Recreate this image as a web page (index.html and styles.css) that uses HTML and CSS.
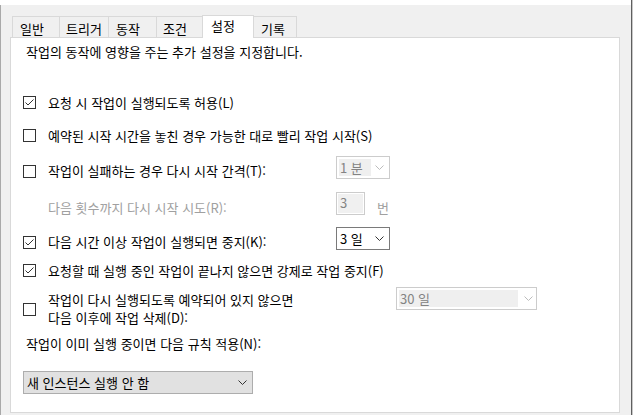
FILE: index.html
```html
<!DOCTYPE html>
<html lang="ko">
<head>
<meta charset="utf-8">
<title>설정</title>
<link rel="stylesheet" href="styles.css">
</head>
<body>
<div class="frame">
  <div class="main">
    <div class="topstrip"></div>
    <div class="workspace">
      <div class="tabs">
        <div class="tab t1">일반</div>
        <div class="tab t2">트리거</div>
        <div class="tab t3">동작</div>
        <div class="tab t4">조건</div>
        <div class="tab t5 active">설정</div>
        <div class="tab t6">기록</div>
      </div>
      <div class="panel">
        <p class="desc">작업의 동작에 영향을 주는 추가 설정을 지정합니다.</p>

        <div class="row r1">
          <span class="cb"><svg width="11" height="11" viewBox="0 0 11 11"><polyline points="1.5,5.5 4,8 9.5,2.5" fill="none" stroke="#333" stroke-width="1"/></svg></span>
          <span class="label">요청 시 작업이 실행되도록 허용(L)</span>
        </div>

        <div class="row r2">
          <span class="cb"></span>
          <span class="label">예약된 시작 시간을 놓친 경우 가능한 대로 빨리 작업 시작(S)</span>
        </div>

        <div class="row r3 ctl">
          <span class="cb"></span>
          <span class="label fixed">작업이 실패하는 경우 다시 시작 간격(T):</span>
          <div class="dd small disabled">
            <span class="val">1 분</span>
            <svg class="chev" width="9" height="5" viewBox="0 0 9 5"><polyline points="0.5,0.5 4.5,4.5 8.5,0.5" fill="none" stroke="#bcbcbc" stroke-width="1"/></svg>
          </div>
        </div>

        <div class="row r4 ctl">
          <span class="cb-space"></span>
          <span class="label fixed dim lower">다음 횟수까지 다시 시작 시도(R):</span>
          <div class="num disabled"><span class="val">3</span></div>
          <span class="unit dim">번</span>
        </div>

        <div class="row r5 ctl">
          <span class="cb"><svg width="11" height="11" viewBox="0 0 11 11"><polyline points="1.5,5.5 4,8 9.5,2.5" fill="none" stroke="#333" stroke-width="1"/></svg></span>
          <span class="label fixed">다음 시간 이상 작업이 실행되면 중지(K):</span>
          <div class="dd small">
            <span class="val">3 일</span>
            <svg class="chev" width="9" height="5" viewBox="0 0 9 5"><polyline points="0.5,0.5 4.5,4.5 8.5,0.5" fill="none" stroke="#333" stroke-width="1"/></svg>
          </div>
        </div>

        <div class="row r6">
          <span class="cb"><svg width="11" height="11" viewBox="0 0 11 11"><polyline points="1.5,5.5 4,8 9.5,2.5" fill="none" stroke="#333" stroke-width="1"/></svg></span>
          <span class="label">요청할 때 실행 중인 작업이 끝나지 않으면 강제로 작업 중지(F)</span>
        </div>

        <div class="row r7 ctl">
          <span class="cb"></span>
          <span class="label fixed wide">작업이 다시 실행되도록 예약되어 있지 않으면<br>다음 이후에 작업 삭제(D):</span>
          <div class="dd large disabled">
            <span class="val">30 일</span>
            <svg class="chev" width="9" height="5" viewBox="0 0 9 5"><polyline points="0.5,0.5 4.5,4.5 8.5,0.5" fill="none" stroke="#bcbcbc" stroke-width="1"/></svg>
          </div>
        </div>

        <p class="rule-label">작업이 이미 실행 중이면 다음 규칙 적용(N):</p>

        <div class="combo">
          <span class="val">새 인스턴스 실행 안 함</span>
          <svg class="chev" width="9" height="5" viewBox="0 0 9 5"><polyline points="0.5,0.5 4.5,4.5 8.5,0.5" fill="none" stroke="#333" stroke-width="1"/></svg>
        </div>
      </div>
    </div>
  </div>
  <div class="edge"></div>
</div>
</body>
</html>
```

FILE: styles.css
```css
html, body {
  margin: 0;
  padding: 0;
}

body {
  width: 633px;
  height: 415px;
  overflow: hidden;
  background: #f0f0f0;
  font-family: "Noto Sans CJK KR", "Noto Sans", sans-serif;
  font-size: 13px;
  line-height: 16px;
  color: #000;
}

.frame {
  display: flex;
  width: 633px;
  height: 415px;
}

.main {
  flex: 0 0 631px;
  display: flex;
  flex-direction: column;
}

.topstrip {
  height: 5px;
  background: #ffffff;
}

.workspace {
  flex: 1;
  background: #f0f0f0;
  border-left: 1px solid #a9a9a9;
  padding: 10px 10px 0 9px;
  display: flex;
  flex-direction: column;
}

.edge {
  flex: 0 0 2px;
  background: linear-gradient(to right, #5f5f5f 0 1px, #c8c8c8 1px 2px);
}

/* tabs */
.tabs {
  display: flex;
  align-items: flex-end;
  padding-left: 2px;
  margin-bottom: -1px;
  height: 23px;
}

.tab {
  box-sizing: border-box;
  height: 22px;
  border: 1px solid #d9d9d9;
  border-right: none;
  border-bottom: none;
  background: #f0f0f0;
  padding: 4px 0 0 6px;
  white-space: nowrap;
}

.t1 { width: 47px; padding-left: 7px; }
.t2 { width: 49px; }
.t3 { width: 48px; padding-left: 7px; }
.t4 { width: 46px; }
.t5 { width: 52px; }
.t6 { width: 44px; border-right: 1px solid #d9d9d9; margin-left: -1px; padding-left: 7px; }

.tab.active {
  height: 23px;
  background: #ffffff;
  border-right: 1px solid #d9d9d9;
  padding: 2px 0 0 8px;
  position: relative;
  z-index: 1;
}

/* panel */
.panel {
  box-sizing: border-box;
  width: 610px;
  height: 376px;
  background: #ffffff;
  border: 1px solid #d9d9d9;
  padding: 6px 0 0 0;
  display: flex;
  flex-direction: column;
}

.desc {
  margin: 0 0 0 15px;
}

.row {
  display: flex;
  align-items: flex-start;
  padding-left: 12px;
}

.cb {
  box-sizing: border-box;
  flex: none;
  width: 13px;
  height: 13px;
  border: 1px solid #333333;
  background: #ffffff;
  margin-right: 12px;
  display: flex;
  align-items: center;
  justify-content: center;
}

.cb-space {
  flex: none;
  width: 13px;
  margin-right: 12px;
}

.label {
  white-space: nowrap;
}

.label.fixed {
  flex: none;
  width: 288px;
  padding-top: 7px;
}

.label.wide {
  width: 348px;
  padding-top: 4px;
  line-height: 18px;
}

.label.lower {
  padding-top: 8px;
}

.dim {
  color: #a0a0a0;
}

.r1 { margin-top: 35px; }
.r1 .cb { margin-top: 1px; }
.r2 { margin-top: 17px; }
.r2 .cb { margin-top: 1px; }
.r3 { margin-top: 12px; }
.r3 .cb { margin-top: 9px; }
.r4 { margin-top: 13px; }
.r5 { margin-top: 11px; }
.r5 .cb { margin-top: 9px; }
.r6 { margin-top: 13px; }
.r6 .cb { margin-top: 1px; }
.r7 { margin-top: 8px; }
.r7 .cb { margin-top: 16px; }

/* dropdowns */
.dd {
  box-sizing: border-box;
  flex: none;
  height: 23px;
  border: 1px solid #7a7a7a;
  background: #ffffff;
  display: flex;
  align-items: center;
  padding: 0 5px 0 2px;
}

.dd.small { width: 54px; }
.dd.large { width: 141px; }

.dd .val {
  flex: 1;
  padding-left: 1px;
}

.dd.disabled {
  border-color: #cccccc;
  color: #838383;
}

.dd.disabled .val {
  flex: none;
  background: #efefef;
  line-height: 17px;
}

.dd.small.disabled .val { width: 31px; }
.dd.large.disabled .val { width: 118px; margin-right: 6px; }

.chev {
  flex: none;
  margin-left: auto;
}

.num {
  box-sizing: border-box;
  flex: none;
  width: 29px;
  height: 23px;
  border: 1px solid #cccccc;
  padding: 1px;
}

.num .val {
  display: block;
  height: 19px;
  background: #f0f0f0;
  color: #838383;
  padding-left: 2px;
  line-height: 17px;
}

.unit {
  padding-top: 8px;
  margin-left: 12px;
}

.rule-label {
  margin: 9px 0 0 15px;
}

.combo {
  box-sizing: border-box;
  width: 230px;
  height: 23px;
  margin: 19px 0 0 12px;
  background: #e1e1e1;
  border: 1px solid #adadad;
  display: flex;
  align-items: center;
  padding: 0 5px 0 3px;
}
```
